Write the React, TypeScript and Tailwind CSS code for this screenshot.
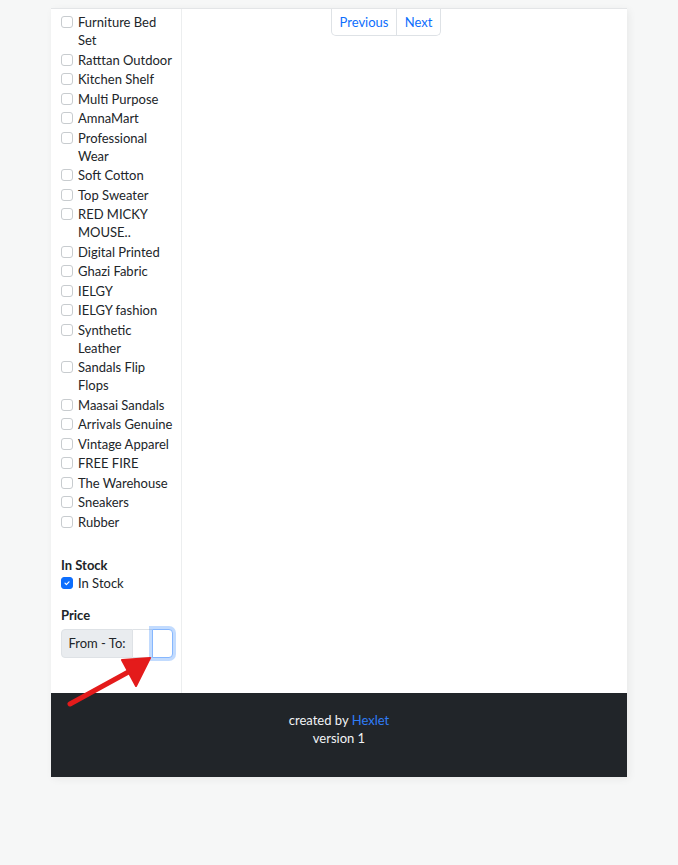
import React from 'react'

const brands: string[][] = [
  ['Furniture Bed', 'Set'],
  ['Ratttan Outdoor'],
  ['Kitchen Shelf'],
  ['Multi Purpose'],
  ['AmnaMart'],
  ['Professional', 'Wear'],
  ['Soft Cotton'],
  ['Top Sweater'],
  ['RED MICKY', 'MOUSE..'],
  ['Digital Printed'],
  ['Ghazi Fabric'],
  ['IELGY'],
  ['IELGY fashion'],
  ['Synthetic', 'Leather'],
  ['Sandals Flip', 'Flops'],
  ['Maasai Sandals'],
  ['Arrivals Genuine'],
  ['Vintage Apparel'],
  ['FREE FIRE'],
  ['The Warehouse'],
  ['Sneakers'],
  ['Rubber'],
]

function Check({ lines, checked = false }: { lines: string[]; checked?: boolean }) {
  return (
    <div className="flex items-start mb-[1.5px]">
      <span
        className={`mt-[3px] w-[12px] h-[12px] rounded-[3px] border shrink-0 flex items-center justify-center ${checked ? 'bg-[#0d6efd] border-[#0d6efd]' : 'bg-white border-[#c8cccf]'}`}
      >
        {checked && (
          <svg width="8" height="8" viewBox="0 0 20 20">
            <path d="M5 10.5l3.5 3.5 6.5-7" fill="none" stroke="white" strokeWidth="3" strokeLinecap="round" strokeLinejoin="round" />
          </svg>
        )}
      </span>
      <div className="ml-[5px] whitespace-nowrap">
        {lines.map((l, i) => <div key={i}>{l}</div>)}
      </div>
    </div>
  )
}

export default function App() {
  return (
    <div
      className="relative min-h-[865px] bg-[#f6f7f7] text-[#212529] text-[13px] leading-[18px]"
      style={{ fontFamily: 'Lato, "Noto Sans", sans-serif' }}
    >
      <div className="h-[8px]" />
      <div className="ml-[51px] w-[576px] bg-white border-t border-[#e3e5e7] shadow-[2px_2px_8px_rgba(0,0,0,0.06)]">
        <div className="flex">
          {/* Sidebar */}
          <div className="w-[131px] border-r border-[#eceeef] pl-[10px] pt-[4px] pb-[35px]">
            {brands.map((b, i) => <Check key={i} lines={b} />)}

            <div className="mt-[25px] font-bold">In Stock</div>
            <Check lines={['In Stock']} checked />

            <div className="mt-[14px] font-bold">Price</div>
            <div className="mt-[5px] flex h-[29px]">
              <span className="flex items-center justify-center whitespace-nowrap w-[72px] bg-[#e9ecef] border border-[#dee2e6] rounded-l-[4px]">From - To:</span>
              <span className="w-[19px] border-y border-[#dee2e6] bg-white" />
              <span className="w-[21px] rounded-r-[4px] border border-[#86b7fe] bg-white shadow-[0_0_0_3px_rgba(13,110,253,0.25)]" />
            </div>
          </div>

          {/* Main */}
          <div className="flex-1 pl-[149px]">
            <div className="flex h-[27px] w-[110px] border border-t-0 border-[#dee2e6] rounded-b-[5px] text-[#0d6efd]">
              <span className="flex items-center justify-center w-[65px] border-r border-[#dee2e6]">Previous</span>
              <span className="flex items-center justify-center flex-1">Next</span>
            </div>
          </div>
        </div>

        {/* Footer */}
        <div className="bg-[#212529] h-[84px] pt-[18px] text-center text-[#f1f3f5]">
          <div>
            created by <span className="text-[#2f7cf6]">Hexlet</span>
          </div>
          <div>version 1</div>
        </div>
      </div>

      {/* annotation arrow */}
      <svg className="absolute left-[60px] top-[648px]" width="110" height="65" viewBox="0 0 110 65">
        <g fill="#e41b1b" stroke="#e41b1b" strokeLinecap="round" strokeLinejoin="round">
          <line x1="10" y1="56" x2="72" y2="22" strokeWidth="5" />
          <polygon points="90,10 62,12 76,38" strokeWidth="2" />
        </g>
      </svg>
    </div>
  )
}
